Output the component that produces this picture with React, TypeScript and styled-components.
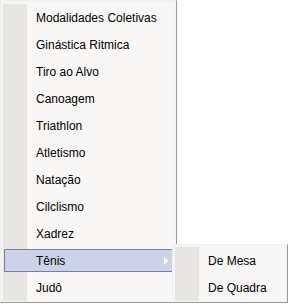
import React from "react";
import styled, { createGlobalStyle } from "styled-components";

const Global = createGlobalStyle`
  html, body { margin: 0; padding: 0; background: #ffffff; }
  body { font-family: "Liberation Sans", Arial, sans-serif; }
`;

const Page = styled.div`
  position: relative;
  width: 291px;
  height: 306px;
`;

const MenuBox = styled.div<{ $w: number; $pt: number }>`
  width: ${(p) => p.$w}px;
  box-sizing: border-box;
  background: #f5f5f5;
  border-top: 1px solid #f0f0f0;
  border-left: 1px solid #f0f0f0;
  border-right: 1px solid #9a9a9a;
  border-bottom: 1px solid #9a9a9a;
  padding: ${(p) => p.$pt}px 2px 1px 2px;
`;

const MenuBody = styled.div`
  display: flex;
  flex-direction: column;
  background: linear-gradient(
    to right,
    #e8e6e3 0,
    #e8e6e3 24px,
    #f8f7f6 24px,
    #f8f7f6 100%
  );
`;

const Item = styled.div`
  height: 27px;
  display: flex;
  align-items: center;
  padding: 2px 1px 2px 1px;
  box-sizing: border-box;
`;

const ItemInner = styled.div<{ $active?: boolean }>`
  flex: 1;
  height: 100%;
  box-sizing: border-box;
  display: flex;
  align-items: center;
  border: 1px solid ${(p) => (p.$active ? "#7c7aa8" : "transparent")};
  background: ${(p) => (p.$active ? "#cdd3e6" : "transparent")};
  padding-left: 31px;
  padding-right: 4px;
`;

const Label = styled.span`
  flex: 1;
  font-size: 12px;
  color: #000000;
  white-space: nowrap;
  line-height: 14px;
`;

const Arrow = styled.span`
  width: 0;
  height: 0;
  border-top: 4px solid transparent;
  border-bottom: 4px solid transparent;
  border-left: 4px solid #ffffff;
`;

const SubMenu = styled.div`
  position: absolute;
  left: 172px;
  top: 244px;
`;

const items = [
  "Modalidades Coletivas",
  "Ginástica Ritmica",
  "Tiro ao Alvo",
  "Canoagem",
  "Triathlon",
  "Atletismo",
  "Natação",
  "Cilclismo",
  "Xadrez",
  "Tênis",
  "Judô",
];

export default function App() {
  return (
    <Page>
      <Global />
      <MenuBox $w={177} $pt={3}>
        <MenuBody>
          {items.map((t) => (
            <Item key={t}>
              <ItemInner $active={t === "Tênis"}>
                <Label>{t}</Label>
                {t === "Tênis" && <Arrow />}
              </ItemInner>
            </Item>
          ))}
        </MenuBody>
      </MenuBox>
      <SubMenu>
        <MenuBox $w={116} $pt={2}>
          <MenuBody>
            {["De Mesa", "De Quadra"].map((t) => (
              <Item key={t}>
                <ItemInner>
                  <Label>{t}</Label>
                </ItemInner>
              </Item>
            ))}
          </MenuBody>
        </MenuBox>
      </SubMenu>
    </Page>
  );
}
